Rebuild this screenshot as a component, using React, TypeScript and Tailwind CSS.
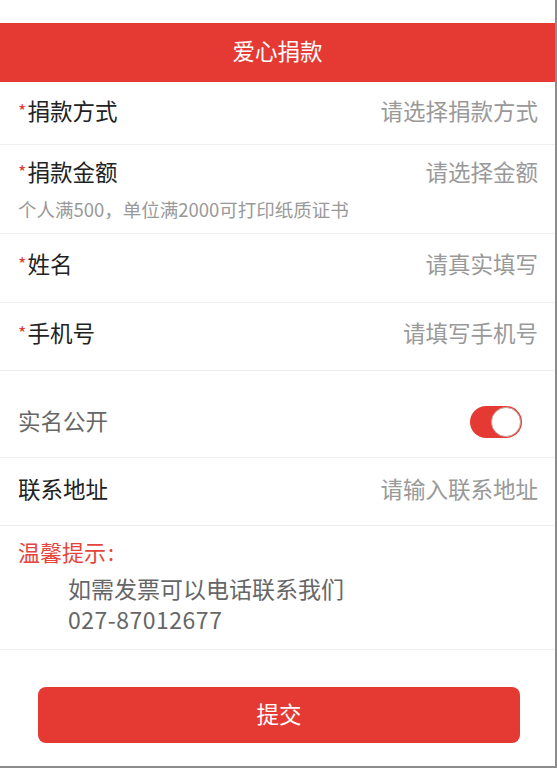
import React from "react";

const font = { fontFamily: '"Noto Sans CJK SC", "Noto Sans", sans-serif' };

function Star() {
  return <span className="text-[#e53935] text-[18px] mr-[1px] relative -top-[2px]">*</span>;
}

export default function App() {
  return (
    <div
      className="w-[557px] h-[768px] bg-white overflow-hidden border-r-2 border-b-2 border-[#8c8c8c] box-border"
      style={font}
    >
      <div className="h-[23px] bg-white" />
      <div className="h-[59px] pb-[6px] bg-[#e53a33] flex items-center justify-center box-border">
        <span className="text-white text-[22.5px] leading-[30px]">爱心捐款</span>
      </div>

      {/* 捐款方式 */}
      <div className="h-[63px] pt-[13px] pl-[18px] pr-[17px] flex justify-between border-b border-[#eeeeee] box-border">
        <div className="text-[22.5px] leading-[30px] text-[#222]"><Star />捐款方式</div>
        <div className="text-[22.5px] leading-[30px] text-[#999]">请选择捐款方式</div>
      </div>

      {/* 捐款金额 */}
      <div className="h-[89px] pt-[11px] pl-[18px] pr-[17px] border-b border-[#eeeeee] box-border">
        <div className="flex justify-between">
          <div className="text-[22.5px] leading-[30px] text-[#222]"><Star />捐款金额</div>
          <div className="text-[22.5px] leading-[30px] text-[#999]">请选择金额</div>
        </div>
        <div className="mt-[9px] text-[18.5px] leading-[24px] text-[#999]">个人满500，单位满2000可打印纸质证书</div>
      </div>

      {/* 姓名 */}
      <div className="h-[69px] pt-[14px] pl-[18px] pr-[17px] flex justify-between border-b border-[#eeeeee] box-border">
        <div className="text-[22.5px] leading-[30px] text-[#222]"><Star />姓名</div>
        <div className="text-[22.5px] leading-[30px] text-[#999]">请真实填写</div>
      </div>

      {/* 手机号 */}
      <div className="h-[68px] pt-[14px] pl-[18px] pr-[17px] flex justify-between border-b border-[#eeeeee] box-border">
        <div className="text-[22.5px] leading-[30px] text-[#222]"><Star />手机号</div>
        <div className="text-[22.5px] leading-[30px] text-[#999]">请填写手机号</div>
      </div>

      {/* 实名公开 */}
      <div className="h-[87px] pt-[34px] pl-[18px] pr-[33px] flex justify-between border-b border-[#eeeeee] box-border">
        <div className="text-[22.5px] leading-[30px] text-[#666]">实名公开</div>
        <div className="w-[52px] h-[32px] rounded-full bg-[#e53a33] relative mt-[1px]">
          <div className="absolute right-[1px] top-[1px] w-[30px] h-[30px] rounded-full bg-white border border-[#c9a3a0]" />
        </div>
      </div>

      {/* 联系地址 */}
      <div className="h-[68px] pt-[15px] pl-[18px] pr-[17px] flex justify-between border-b border-[#eeeeee] box-border">
        <div className="text-[22.5px] leading-[30px] text-[#222]">联系地址</div>
        <div className="text-[22.5px] leading-[30px] text-[#999]">请输入联系地址</div>
      </div>

      {/* 温馨提示 */}
      <div className="h-[124px] pt-[11px] px-[18px] border-b border-[#eeeeee] box-border">
        <div className="text-[22px] leading-[28px] text-[#e5443d]">温馨提示<span className="ml-[2px]">:</span></div>
        <div className="mt-[8px] pl-[50px] text-[23px] leading-[31px] text-[#666]">
          <div>如需发票可以电话联系我们</div>
          <div className="tracking-[0.5px]">027-87012677</div>
        </div>
      </div>

      <div className="pt-[37px] pl-[38px] pr-[35px]">
        <button className="w-full h-[56px] pb-[5px] rounded-[8px] bg-[#e53a33] text-white text-[22.5px] leading-[30px] box-border">
          提交
        </button>
      </div>
    </div>
  );
}
